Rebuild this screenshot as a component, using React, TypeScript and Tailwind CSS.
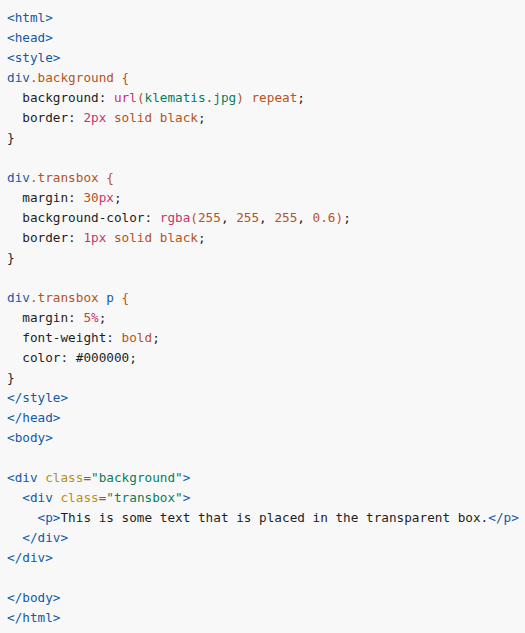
import React from "react";

type Tok = [string, string];
const T = "text-[#1459a6]"; // tag blue
const S = "text-[#b5541c]"; // selector brown
const K = "text-[#1e1e1e]"; // plain
const P = "text-[#c8336f]"; // pink
const G = "text-[#0b7d5b]"; // green
const A = "text-[#b89112]"; // attr gold

const lines: Tok[][] = [
  [["<html>", T]],
  [["<head>", T]],
  [["<style>", T]],
  [["div", T], [".background", S], [" {", S]],
  [["  background: ", K], ["url", P], ["(", S], ["klematis.jpg", G], [")", S], [" repeat", S], [";", K]],
  [["  border: ", K], ["2px", P], [" solid black", S], [";", K]],
  [["}", K]],
  [],
  [["div", T], [".transbox", S], [" {", S]],
  [["  margin: ", K], ["30", S], ["px", P], [";", K]],
  [["  background-color: ", K], ["rgba", P], ["(", S], ["255", S], [", ", K], ["255", S], [", ", K], ["255", S], [", ", K], ["0.6", S], [")", S], [";", K]],
  [["  border: ", K], ["1px", P], [" solid black", S], [";", K]],
  [["}", K]],
  [],
  [["div", T], [".transbox", S], [" p", T], [" {", S]],
  [["  margin: ", K], ["5", S], ["%", P], [";", K]],
  [["  font-weight: ", K], ["bold", S], [";", K]],
  [["  color: #000000;", K]],
  [["}", K]],
  [["</style>", T]],
  [["</head>", T]],
  [["<body>", T]],
  [],
  [["<div ", T], ["class", A], ["=", P], ['"background"', G], [">", T]],
  [["  <div ", T], ["class", A], ["=", P], ['"transbox"', G], [">", T]],
  [["    <p>", T], ["This is some text that is placed in the transparent box.", K], ["</p>", T]],
  [["  </div>", T]],
  [["</div>", T]],
  [],
  [["</body>", T]],
  [["</html>", T]],
];

export default function App() {
  return (
    <div className="w-[525px] h-[633px] bg-[#f8f8f8] pt-[8px] pl-[7px] overflow-hidden">
      <pre
        className="m-0 text-[12.7px] leading-[20px] whitespace-pre"
        style={{ fontFamily: '"DejaVu Sans Mono", "Liberation Mono", monospace' }}
      >
        {lines.map((ln, i) => (
          <div key={i} className="h-[20px]">
            {ln.map(([t, c], j) => (
              <span key={j} className={c}>
                {t}
              </span>
            ))}
          </div>
        ))}
      </pre>
    </div>
  );
}
